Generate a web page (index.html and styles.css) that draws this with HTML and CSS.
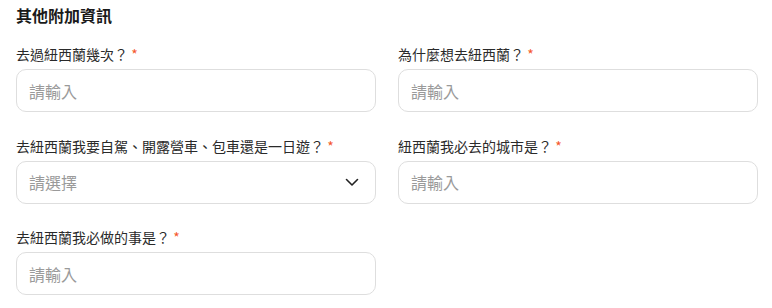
FILE: index.html
```html
<!DOCTYPE html>
<html lang="zh-Hant">
<head>
<meta charset="utf-8">
<link rel="stylesheet" href="styles.css">
</head>
<body>
<section class="form">
  <h2 class="title">其他附加資訊</h2>
  <div class="grid">
    <div class="field">
      <label class="label">去過紐西蘭幾次？ <span class="req">*</span></label>
      <div class="input"><span class="ph">請輸入</span></div>
    </div>
    <div class="field">
      <label class="label">為什麼想去紐西蘭？ <span class="req">*</span></label>
      <div class="input"><span class="ph">請輸入</span></div>
    </div>
    <div class="field">
      <label class="label">去紐西蘭我要自駕、開露營車、包車還是一日遊？ <span class="req">*</span></label>
      <div class="input select"><span class="ph">請選擇</span>
        <svg class="chev" width="16" height="16" viewBox="0 0 16 16"><path d="M2.5 5.5 L8 11 L13.5 5.5" fill="none" stroke="#222" stroke-width="1.6" stroke-linecap="round" stroke-linejoin="round"/></svg>
      </div>
    </div>
    <div class="field">
      <label class="label">紐西蘭我必去的城市是？ <span class="req">*</span></label>
      <div class="input"><span class="ph">請輸入</span></div>
    </div>
    <div class="field">
      <label class="label">去紐西蘭我必做的事是？ <span class="req">*</span></label>
      <div class="input"><span class="ph">請輸入</span></div>
    </div>
  </div>
</section>
</body>
</html>
```

FILE: styles.css
```css
* { box-sizing: border-box; }
body {
  margin: 0;
  background: #fff;
  font-family: "Noto Sans CJK TC", "Noto Sans", sans-serif;
  color: #222;
}
.form {
  padding: 3px 14px 0 16px;
}
.title {
  margin: 0 0 16px;
  font-size: 16px;
  line-height: 24px;
  font-weight: 700;
  color: #1a1a1a;
}
.grid {
  display: grid;
  grid-template-columns: 360px 360px;
  column-gap: 22px;
  row-gap: 22.5px;
}
.field {
  display: flex;
  flex-direction: column;
  gap: 4px;
}
.label {
  font-size: 14px;
  line-height: 22px;
  color: #2a2a2a;
}
.req {
  color: #f5572c;
}
.input {
  height: 43px;
  border: 1px solid #dedede;
  border-radius: 10px;
  display: flex;
  align-items: center;
  padding: 0 12px;
}
.ph {
  font-size: 16px;
  color: #9a9a9a;
}
.select {
  justify-content: space-between;
  padding-right: 15px;
}
.chev { display: block; }
```
